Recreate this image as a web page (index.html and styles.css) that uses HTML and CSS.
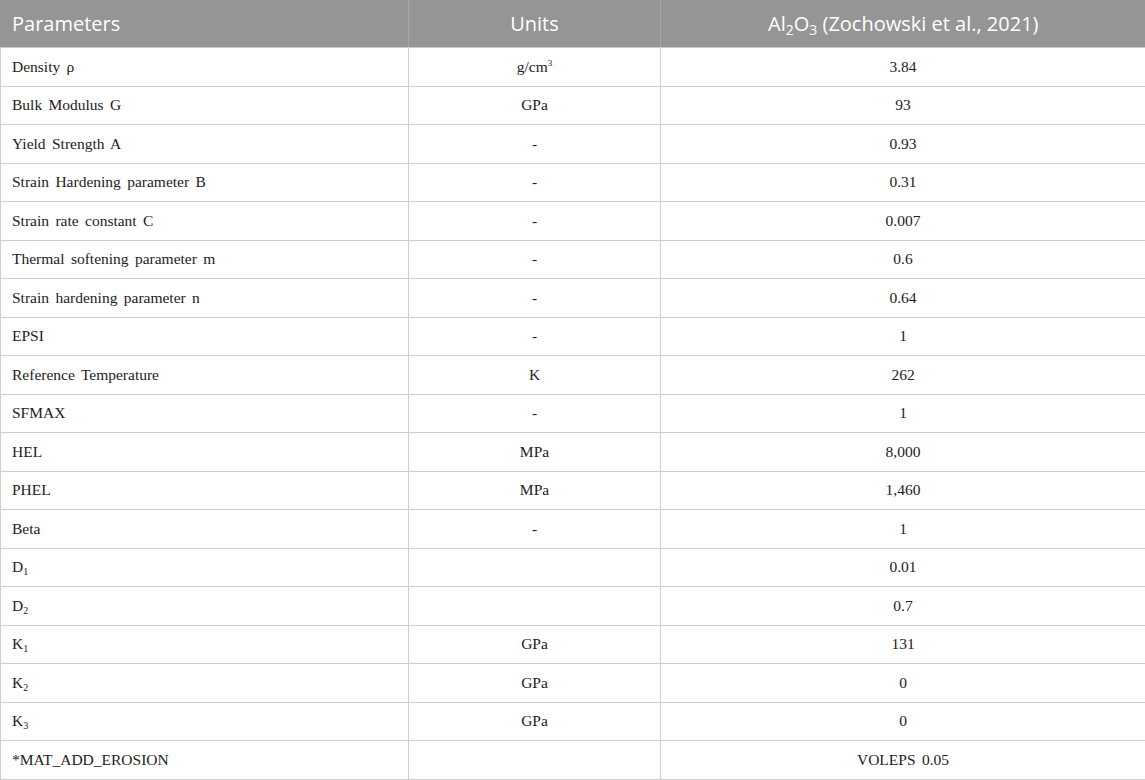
FILE: index.html
```html
<!DOCTYPE html>
<html>
<head>
<meta charset="utf-8">
<link rel="stylesheet" href="styles.css">
</head>
<body>
<table class="data">
  <colgroup>
    <col class="c1"><col class="c2"><col class="c3">
  </colgroup>
  <thead>
    <tr>
      <th class="left">Parameters</th>
      <th>Units</th>
      <th>Al<sub>2</sub>O<sub>3</sub> (Zochowski et al., 2021)</th>
    </tr>
  </thead>
  <tbody>
    <tr><td class="left">Density ρ</td><td>g/cm<sup>3</sup></td><td>3.84</td></tr>
    <tr><td class="left">Bulk Modulus G</td><td>GPa</td><td>93</td></tr>
    <tr><td class="left">Yield Strength A</td><td>-</td><td>0.93</td></tr>
    <tr><td class="left">Strain Hardening parameter B</td><td>-</td><td>0.31</td></tr>
    <tr><td class="left">Strain rate constant C</td><td>-</td><td>0.007</td></tr>
    <tr><td class="left">Thermal softening parameter m</td><td>-</td><td>0.6</td></tr>
    <tr><td class="left">Strain hardening parameter n</td><td>-</td><td>0.64</td></tr>
    <tr><td class="left">EPSI</td><td>-</td><td>1</td></tr>
    <tr><td class="left">Reference Temperature</td><td>K</td><td>262</td></tr>
    <tr><td class="left">SFMAX</td><td>-</td><td>1</td></tr>
    <tr><td class="left">HEL</td><td>MPa</td><td>8,000</td></tr>
    <tr><td class="left">PHEL</td><td>MPa</td><td>1,460</td></tr>
    <tr><td class="left">Beta</td><td>-</td><td>1</td></tr>
    <tr><td class="left">D<sub class="s">1</sub></td><td></td><td>0.01</td></tr>
    <tr><td class="left">D<sub class="s">2</sub></td><td></td><td>0.7</td></tr>
    <tr><td class="left">K<sub class="s">1</sub></td><td>GPa</td><td>131</td></tr>
    <tr><td class="left">K<sub class="s">2</sub></td><td>GPa</td><td>0</td></tr>
    <tr><td class="left">K<sub class="s">3</sub></td><td>GPa</td><td>0</td></tr>
    <tr><td class="left">*MAT_ADD_EROSION</td><td></td><td>VOLEPS 0.05</td></tr>
  </tbody>
</table>
</body>
</html>
```
FILE: styles.css
```css
html, body {
  margin: 0;
  padding: 0;
  background: #ffffff;
}

.data {
  width: 1145px;
  border-collapse: collapse;
  table-layout: fixed;
  font-family: "Liberation Serif", "Times New Roman", serif;
  font-size: 15.5px;
  color: #222222;
}

.c1 { width: 408px; }
.c2 { width: 252px; }
.c3 { width: 485px; }

.data th {
  background: #959595;
  color: #ffffff;
  font-family: "Open Sans", "Liberation Sans", sans-serif;
  font-weight: 400;
  font-size: 20px;
  height: 47px;
  padding: 0 10px;
  text-align: center;
  border-left: 1px solid #a8a8a8;
  border-bottom: 1px solid #c8c8c8;
}

.data th:first-child { border-left: 1px solid #959595; }

.data th sub {
  font-size: 14px;
  vertical-align: -4px;
  line-height: 0;
}

.data td {
  height: 37.5px;
  padding: 0 10px;
  text-align: center;
  border: 1px solid #cfcfcf;
  word-spacing: 2.5px;
}

.data .left {
  text-align: left;
  padding-left: 11px;
}

.data td sup {
  font-size: 9px;
  vertical-align: 6px;
  line-height: 0;
}

.data td sub.s {
  font-size: 10px;
  vertical-align: -3px;
  line-height: 0;
}
```
